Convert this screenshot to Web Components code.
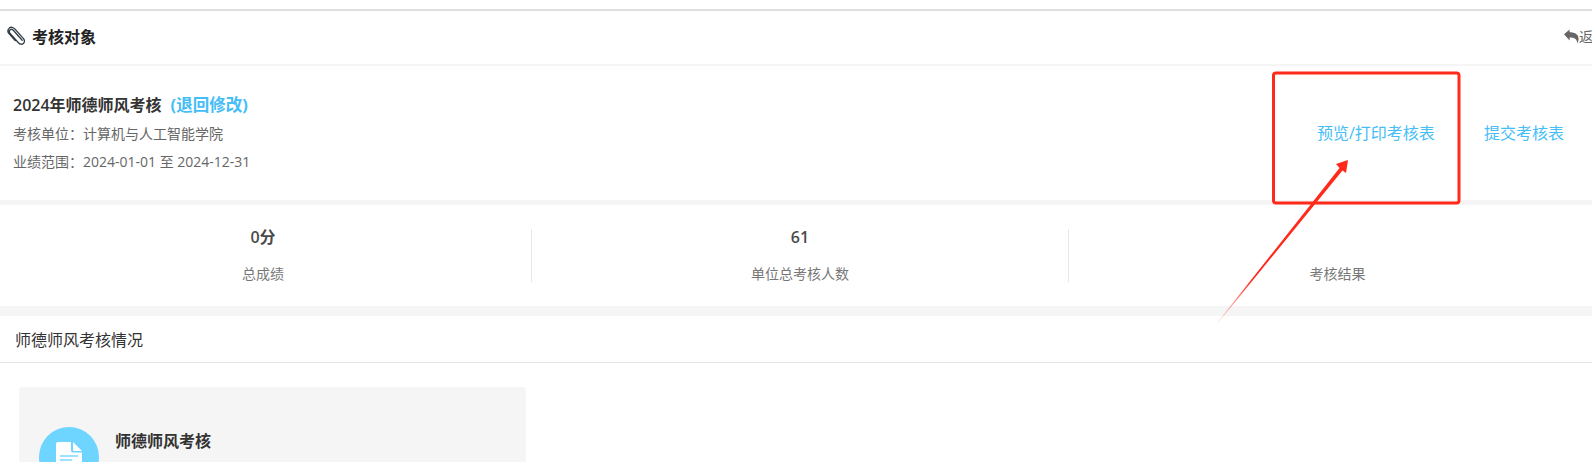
<!DOCTYPE html>
<html lang="zh-CN">
<head>
<meta charset="utf-8">
<title>考核对象</title>
<style>
html,body{margin:0;padding:0;background:#fff;height:462px;overflow:hidden}
body{font-family:"Open Sans","Noto Sans CJK SC",sans-serif;color:#333}
</style>
</head>
<body>
<assess-page>
  <page-header slot="header" back="返回">考核对象</page-header>
  <info-panel slot="info" name="2024年师德师风考核" status="(退回修改)" unit="考核单位&#xFF1A;计算机与人工智能学院" range="业绩范围&#xFF1A;2024-01-01 至 2024-12-31">
    <span>预览/打印考核表</span>
    <span>提交考核表</span>
  </info-panel>
  <stat-bar slot="stats">
    <stat-item value="0分" label="总成绩" style="padding-right:5px"></stat-item>
    <stat-item value="61" label="单位总考核人数"></stat-item>
    <stat-item value="" label="考核结果"></stat-item>
  </stat-bar>
  <section-title slot="section">师德师风考核情况</section-title>
  <assess-card slot="cards" name="师德师风考核"></assess-card>
  <red-annotation slot="overlay"></red-annotation>
</assess-page>
<script>
function def(name, html){
  customElements.define(name, class extends HTMLElement{
    connectedCallback(){
      if(this.shadowRoot) return;
      const r=this.attachShadow({mode:'open'});
      const a=n=>this.getAttribute(n)||'';
      r.innerHTML=html(a);
    }
  });
}
def('assess-page',()=>`<style>
:host{display:block;position:relative;width:1592px;height:462px;overflow:hidden;background:#fff;padding-top:9px;box-sizing:border-box}
.w{width:1610px;display:flex;flex-direction:column;border-top:2px solid #dedede}
</style><div class="w"><slot name="header"></slot><slot name="info"></slot><slot name="stats"></slot><slot name="section"></slot><slot name="cards"></slot></div><slot name="overlay"></slot>`);
def('page-header',a=>`<style>
:host{display:flex;align-items:center;justify-content:space-between;height:50px;border-bottom:2px solid #f5f5f5;padding:0 0 3px 7px;box-sizing:content-box}
.l{display:flex;align-items:center;gap:7px;font-size:16px;font-weight:700;color:#222}
.r{display:flex;align-items:center;width:46px;font-size:14px;color:#666;white-space:nowrap}
svg{display:block}
</style>
<div class="l"><svg width="18" height="20" viewBox="0 0 18 20" fill="none" stroke="#2f3a46" stroke-width="1.3" stroke-linecap="round" stroke-linejoin="round"><path d="M15.200 14.200 6.300 4.300C5.200 3.100 3.800 3.200 3 4s-1 2.200.1 3.400l8.300 9.300c1.700 1.900 3.700 1.900 5 .7 1.400-1.200 1.500-3.200-.1-5L8 3.100C6.200 1 3.900.7 2.300 2.100.7 3.600.5 5.900 2.200 7.900l6 6.700"/></svg><span><slot></slot></span></div>
<div class="r"><svg width="15" height="14" viewBox="0 0 15 14"><path fill="#666" d="M0 5.200 5.600.4v2.900c5 .1 9 1.700 9 6.600 0 1.500-.5 3-1.500 4 .1-3.900-2.800-5.400-7.500-5.400v3z"/></svg><span>${a('back')}</span></div>`);
def('info-panel',a=>`<style>
:host{display:flex;align-items:center;justify-content:space-between;height:134px;padding-left:13px;box-sizing:border-box}
.b{align-self:flex-start;padding-top:28px}
.t{font-size:16px;font-weight:600;color:#333;line-height:22px;display:flex;gap:9px;margin-bottom:4px}
.s{color:#45bdf7;font-weight:700;font-size:16.500px}
.m{font-size:14px;color:#666;line-height:28px}
.a{display:flex;gap:49px;width:293px;font-size:16px;color:#45bdf7;line-height:22px}
</style>
<div class="b"><div class="t"><span>${a('name')}</span><span class="s">${a('status')}</span></div><div class="m">${a('unit')}</div><div class="m">${a('range')}</div></div>
<div class="a"><slot></slot></div>`);
def('stat-bar',()=>`<style>
:host{display:grid;grid-template-columns:532px 537px 537px;height:101px;align-items:center;border-top:5px solid #f5f5f5;border-bottom:10px solid #f5f5f5;box-sizing:content-box}
::slotted(stat-item:not(:last-child)){border-right:1px solid #e6e6e6}
</style><slot></slot>`);
def('stat-item',a=>`<style>
:host{display:flex;flex-direction:column;align-items:center;height:53px;box-sizing:border-box}
.v{font-size:16px;font-weight:600;color:#4a4a4a;height:16px;line-height:16px;flex:none}
.l{font-size:14px;color:#777;line-height:20px;margin-top:19px;flex:none}
</style><div class="v">${a('value')}</div><div class="l">${a('label')}</div>`);
def('section-title',()=>`<style>
:host{display:flex;align-items:center;height:46px;padding-left:15px;border-bottom:1px solid #e5e5e5;font-size:16px;color:#333}
</style><slot></slot>`);
def('assess-card',a=>`<style>
:host{display:flex;align-items:flex-start;gap:16px;width:507px;height:160px;margin:24px 0 0 19px;padding:40px 0 0 20px;box-sizing:border-box;background:#f5f5f5;border-radius:4px}
.c{width:60px;height:60px;border-radius:50%;background:#6dd5ff;display:flex;justify-content:center;padding-top:15px;box-sizing:border-box;flex:none}
.n{font-size:16px;font-weight:700;color:#333;line-height:28px}
</style><div class="c"><svg width="26" height="32" viewBox="0 0 26 32"><path fill="#fff" d="M2 0h13v8.500a2 2 0 0 0 2 2H26V29a2 2 0 0 1-2 2H2a2 2 0 0 1-2-2V2a2 2 0 0 1 2-2z"/><path fill="#fff" d="M17 0l9 9h-8a1 1 0 0 1-1-1z"/><path stroke="#7fd9ff" stroke-width="1.500" d="M4 14h18M4 18h12"/></svg></div><div class="n">${a('name')}</div>`);
def('red-annotation',()=>`<style>
:host{position:absolute;inset:0;pointer-events:none;display:block}
svg{position:absolute;left:0;top:0}
</style><svg width="1592" height="462" viewBox="0 0 1592 462"><defs><linearGradient id="g" gradientUnits="userSpaceOnUse" x1="1217" y1="323" x2="1252" y2="280"><stop offset="0" stop-color="#ff2a1a" stop-opacity=".05"/><stop offset="1" stop-color="#ff2a1a"/></linearGradient></defs>
<rect x="1273.500" y="73" width="185.500" height="130" rx="2.500" fill="none" stroke="#ff2a1a" stroke-width="3"/>
<path fill="url(#g)" d="M1217 323 1339.500 168 1336 164 1348 160 1346 173 1342.500 170.500 1218 323z"/></svg>`);
</script>
</body>
</html>
